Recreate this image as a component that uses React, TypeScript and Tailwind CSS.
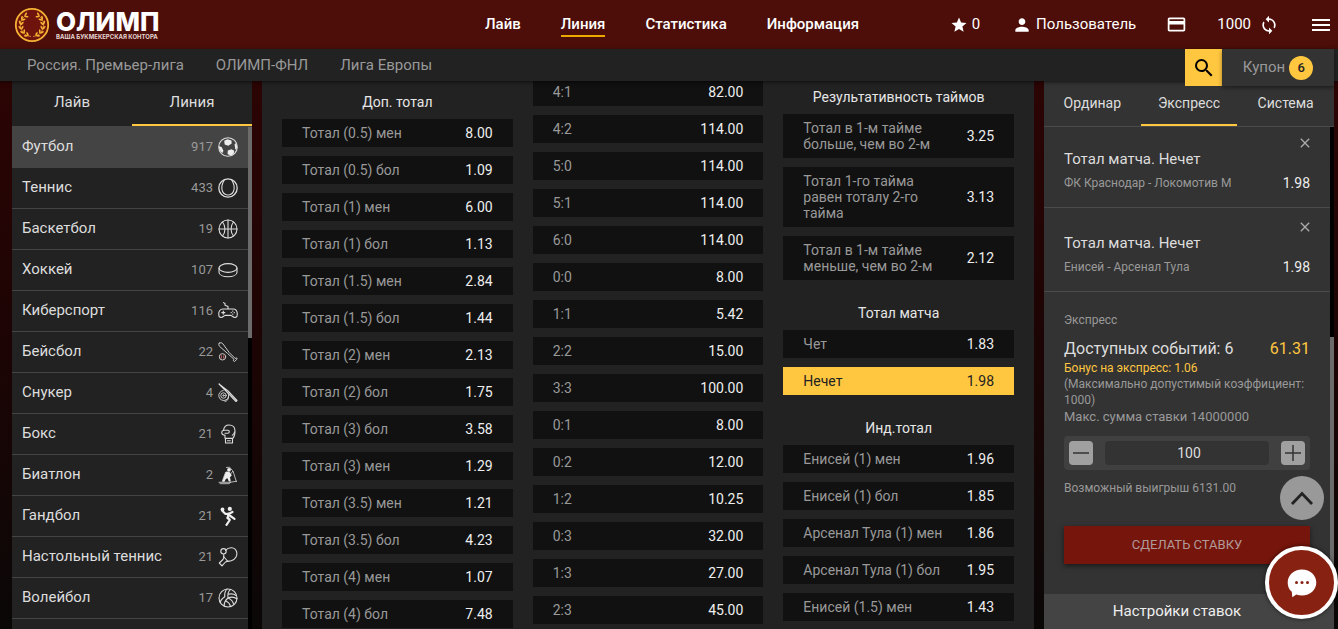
import { useState, type ReactNode } from "react";
import {
  MdClose,
  MdCreditCard,
  MdMenu,
  MdPerson,
  MdSearch,
  MdStar,
  MdSync,
} from "react-icons/md";

type Outcome = { name: string; odds: string };
type Market = { title?: string; outcomes: Outcome[] };
type Bet = { id: number; title: string; match: string; odds: string };
type Sport = { name: string; count: number; icon: ReactNode };

const toOutcomes = (rows: [string, string][]): Outcome[] =>
  rows.map(([name, odds]) => ({ name, odds }));

const extraTotal: Market = {
  title: "Доп. тотал",
  outcomes: toOutcomes([
    ["Тотал (0.5) мен", "8.00"],
    ["Тотал (0.5) бол", "1.09"],
    ["Тотал (1) мен", "6.00"],
    ["Тотал (1) бол", "1.13"],
    ["Тотал (1.5) мен", "2.84"],
    ["Тотал (1.5) бол", "1.44"],
    ["Тотал (2) мен", "2.13"],
    ["Тотал (2) бол", "1.75"],
    ["Тотал (3) бол", "3.58"],
    ["Тотал (3) мен", "1.29"],
    ["Тотал (3.5) мен", "1.21"],
    ["Тотал (3.5) бол", "4.23"],
    ["Тотал (4) мен", "1.07"],
    ["Тотал (4) бол", "7.48"],
  ]),
};

const scores: Market = {
  outcomes: toOutcomes([
    ["4:1", "82.00"],
    ["4:2", "114.00"],
    ["5:0", "114.00"],
    ["5:1", "114.00"],
    ["6:0", "114.00"],
    ["0:0", "8.00"],
    ["1:1", "5.42"],
    ["2:2", "15.00"],
    ["3:3", "100.00"],
    ["0:1", "8.00"],
    ["0:2", "12.00"],
    ["1:2", "10.25"],
    ["0:3", "32.00"],
    ["1:3", "27.00"],
    ["2:3", "45.00"],
  ]),
};

const halves: Market = {
  title: "Результативность таймов",
  outcomes: toOutcomes([
    ["Тотал в 1-м тайме больше, чем во 2-м", "3.25"],
    ["Тотал 1-го тайма равен тоталу 2-го тайма", "3.13"],
    ["Тотал в 1-м тайме меньше, чем во 2-м", "2.12"],
  ]),
};

const parity: Market = {
  title: "Тотал матча",
  outcomes: toOutcomes([
    ["Чет", "1.83"],
    ["Нечет", "1.98"],
  ]),
};

const teamTotal: Market = {
  title: "Инд.тотал",
  outcomes: toOutcomes([
    ["Енисей (1) мен", "1.96"],
    ["Енисей (1) бол", "1.85"],
    ["Арсенал Тула (1) мен", "1.86"],
    ["Арсенал Тула (1) бол", "1.95"],
    ["Енисей (1.5) мен", "1.43"],
  ]),
};

const initialBets: Bet[] = [
  { id: 1, title: "Тотал матча. Нечет", match: "ФК Краснодар - Локомотив М", odds: "1.98" },
  { id: 2, title: "Тотал матча. Нечет", match: "Енисей - Арсенал Тула", odds: "1.98" },
];

function Icon({ children }: { children: ReactNode }) {
  return (
    <svg
      viewBox="0 0 20 20"
      className="size-5 shrink-0"
      fill="none"
      stroke="#ddd"
      strokeWidth="1.1"
      strokeLinecap="round"
      strokeLinejoin="round"
      aria-hidden="true"
    >
      {children}
    </svg>
  );
}

const sports: Sport[] = [
  {
    name: "Футбол",
    count: 917,
    icon: (
      <Icon>
        <circle cx="10" cy="10" r="9.3" />
        <g fill="#eee" stroke="none">
          <path d="M6.2 3.8 9.5 2.2l4 1.2.2 3-3.4 2.3-3.6-1.2z" />
          <path d="M1 9.2 3.6 10l1.8 3.7-.9 2.4C2.3 14.3.8 12 1 9.2z" />
          <path d="M9.8 13.4l3.7-1.2 2.8 1.6-.7 3.2-3 1.8-3-1.8z" />
          <path d="M16.6 7.2l1.5-1.2c1 2 1.200 4.4.4 6.3l-1.2.1z" />
        </g>
      </Icon>
    ),
  },
  {
    name: "Теннис",
    count: 433,
    icon: (
      <Icon>
        <circle cx="10" cy="10" r="9.2" strokeWidth="1.3" />
        <path d="M6.3 2C3.800 6 3.300 10.500 4.600 13.600c2.100 4.600 8.700 4.600 10.800 0 1.300-3.100.8-7.600-1.700-11.600" />
      </Icon>
    ),
  },
  {
    name: "Баскетбол",
    count: 19,
    icon: (
      <Icon>
        <circle cx="10" cy="10" r="9" />
        <path d="M10 1v18M1 10h18M4.5 3c3.3 4 3.3 10 0 14M15.5 3c-3.3 4-3.3 10 0 14" />
      </Icon>
    ),
  },
  {
    name: "Хоккей",
    count: 107,
    icon: (
      <Icon>
        <ellipse cx="10" cy="8" rx="9" ry="4.4" />
        <path d="M1 8v4.200c0 6 18 6 18 0V8" />
      </Icon>
    ),
  },
  {
    name: "Киберспорт",
    count: 116,
    icon: (
      <Icon>
        <path d="M5 8h10c3 0 4.3 2.3 4.3 5.2 0 3.3-2.5 4.1-4.6 2.3L13 14.4H7l-1.7 1.1C3.2 17.3.7 16.5.7 13.2.7 10.3 2 8 5 8zM10 7.8V5.5L7 4.2V2.5l-1.5-.9" />
        <path d="M3.8 11.6h3M5.3 10.1v3" />
        <path
          d="M13.2 11.6h.1M16.2 11.6h.1M14.7 10.1h.1M14.7 13.1h.1"
          strokeWidth="1.3"
        />
      </Icon>
    ),
  },
  {
    name: "Бейсбол",
    count: 22,
    icon: (
      <Icon>
        <path
          d="M1.2 1.2C2.500.2 4 .8 5 2l6.2 8.5 6 6 1.3-.7.7 1.2-2.7 2.5-1.2-.8.7-1.4-6.4-5.8L1.5 4.3C.8 3.2.5 2 1.2 1.2z"
          strokeWidth=".9"
        />
        <circle cx="4.5" cy="14.8" r="3.2" strokeWidth=".9" />
        <path
          d="M2.7 12.7c1.2 1.2 1.2 3 0 4.2M6.3 12.7c-1.2 1.2-1.2 3 0 4.2"
          stroke="#c66"
          strokeWidth=".9"
        />
      </Icon>
    ),
  },
  {
    name: "Снукер",
    count: 4,
    icon: (
      <Icon>
        <path d="M1 1l9 7 9 9.5-1 1L9.5 9.7z" />
        <g strokeWidth=".9">
          <path d="M9.8 9.500a5 5 0 1 1-4.600-2" />
          <circle cx="5.5" cy="12.5" r="2.7" />
          <circle cx="5.5" cy="12.5" r=".7" />
          <path d="M10.5 13.500a4.600 4.600 0 0 1-3.500 5" />
        </g>
      </Icon>
    ),
  },
  {
    name: "Бокс",
    count: 21,
    icon: (
      <Icon>
        <path d="M7 14.2v-3c-2-.3-3.3-1.2-3.3-2.5S4.8 6.500 5.5 6.3C6 2.5 8 1 11 1c4 0 6 2.5 6 6 0 3-.5 5.5-2 7.2z" />
        <path d="M5.5 6.3h4.3c2 0 2 3 0 3H7M14.3 11.3c1.400-.7 2-2 2.200-3.300" />
        <path d="M7.5 14.5h7V19h-7zM9.5 16.7h2.8" />
      </Icon>
    ),
  },
  {
    name: "Биатлон",
    count: 2,
    icon: (
      <Icon>
        <g fill="#eee" stroke="none">
          <circle cx="11" cy="4.8" r="1.9" />
          <path d="M8 6.500l3.5.5 2.3 3.2-1.8 2 .8 4.3h-2l-1.3-3.3-1.7.8-1.3 2.8H4.3l1.5-4.500L7 9z" />
        </g>
        <g strokeWidth=".8">
          <path d="M7.5 7.500l-3.200 8.700M8.500 2.500l3-.3 3 3.300M13 8.500l2-2.500 3.300 10.500" />
          <path d="M1 17.300h11l6.500-1M2 18.700h9l1.500-1.200" />
        </g>
      </Icon>
    ),
  },
  {
    name: "Гандбол",
    count: 21,
    icon: (
      <Icon>
        <circle cx="11.8" cy="2.9" r="2.1" fill="#eee" stroke="none" />
        <circle cx="4.5" cy="3.5" r="1.9" fill="#eee" stroke="none" />
        <g stroke="#eee" strokeWidth="2.2">
          <path d="M4.500 5l3 3 3.500-.3 3.500-1.800M10.500 8l-1 4.300" />
          <path d="M9.800 11.500l2 2.500-3.300 4.800M11 9l5.500 3.800" />
        </g>
      </Icon>
    ),
  },
  {
    name: "Настольный теннис",
    count: 21,
    icon: (
      <Icon>
        <path d="M7.5 3.3C11-.4 17-.1 18.5 4.5c1.3 4-1.3 8.5-5.2 9.3-2.500.5-4 .2-5.800 1.200L4 18.800 1.300 16 5 12.500c1.300-2 .7-3.700.7-5" />
        <path d="M5.5 9.5l4.500 5" />
        <circle cx="5.5" cy="4.3" r="2.7" />
      </Icon>
    ),
  },
  {
    name: "Волейбол",
    count: 17,
    icon: (
      <Icon>
        <circle cx="10" cy="10" r="9" />
        <path d="M10 10C9.500 6.500 10.500 3 12.500 1.300M6.800 8.800C6.300 5.500 7.500 2.700 9 1M10 10c3.300-1.300 6.500-1 8.900.8M10.300 6.300c3-.8 5.800-.2 7.800 1.200M10 10c-2.500 2-4 5-3.800 8M6.800 8.800C4.300 10.500 2.500 12.500 2.300 14.500M10 10c3 1.300 5 3.500 5.600 6M7.800 13c2.200.8 4 2.700 4.700 5.300" />
      </Icon>
    ),
  },
];

function LaurelLogo() {
  const leaves = [-62, -38, -14, 10, 34, 58];
  return (
    <svg viewBox="0 0 36 36" className="size-9 shrink-0" fill="none" aria-hidden="true">
      <circle cx="18" cy="18" r="16.2" fill="#6f140c" stroke="#f5b335" strokeWidth="1.8" />
      {[1, -1].map((side) => (
        <g key={side} transform={`translate(18 18) scale(${side} 1)`}>
          <path d="M1 11.5A11.5 11.5 0 0 0 7.5-8.7" stroke="#f5b335" strokeWidth=".7" />
          {leaves.map((angle) => (
            <g key={angle} transform={`rotate(${angle}) translate(11.3 0)`} fill="#f5b335">
              <ellipse cx="-1.6" cy="0" rx=".9" ry="2.1" transform="rotate(-35)" />
              <ellipse cx="1.2" cy="0" rx=".9" ry="2.1" transform="rotate(30)" />
            </g>
          ))}
        </g>
      ))}
    </svg>
  );
}

function Header() {
  const links = ["Лайв", "Линия", "Статистика", "Информация"];
  return (
    <header className="grid h-[49px] shrink-0 grid-cols-[1fr_auto_1fr] items-center bg-[#4d0e09] pr-2 pl-[14px] text-[15px] text-white">
      <a href="#" className="flex items-center gap-[6px]">
        <LaurelLogo />
        <span className="flex flex-col font-[Inter,sans-serif]">
          <span className="text-[26px] leading-6 font-extrabold">ОЛИМП</span>
          <span className="text-[6px] leading-[6px] font-bold whitespace-nowrap text-[#e6d5d3]">
            ВАША БУКМЕКЕРСКАЯ КОНТОРА
          </span>
        </span>
      </a>
      <nav className="flex gap-10 font-medium">
        {links.map((link) => (
          <a
            key={link}
            href="#"
            className={`border-b-2 leading-[22px] ${link === "Линия" ? "border-[#eba900]" : "border-transparent"}`}
          >
            {link}
          </a>
        ))}
      </nav>
      <div className="flex items-center justify-end">
        <button type="button" className="mr-8 flex items-center gap-1">
          <MdStar className="size-[18px]" />0
        </button>
        <button type="button" className="mr-[30px] flex items-center gap-1">
          <MdPerson className="size-5" />
          Пользователь
        </button>
        <button type="button" aria-label="Пополнить" className="mr-[30px]">
          <MdCreditCard className="size-[21px]" />
        </button>
        <button type="button" className="mr-[30px] flex items-center gap-2">
          1000
          <MdSync className="size-5" />
        </button>
        <button type="button" aria-label="Меню" className="-mr-[3px]">
          <MdMenu className="size-6" />
        </button>
      </div>
    </header>
  );
}

function LeagueBar({ count }: { count: number }) {
  return (
    <div className="relative z-10 flex h-8 shrink-0 items-start bg-[#222] pr-1 pl-[27px] text-[15px] text-[#999] shadow-[0_1px_4px_rgba(0,0,0,0.6)]">
      <nav className="flex flex-1 gap-8 leading-8">
        <a href="#">Россия. Премьер-лига</a>
        <a href="#">ОЛИМП-ФНЛ</a>
        <a href="#">Лига Европы</a>
      </nav>
      <button
        type="button"
        aria-label="Поиск"
        className="flex size-[37px] items-center justify-center bg-[#ffc640] text-black"
      >
        <MdSearch className="size-6" />
      </button>
      <button
        type="button"
        className="flex h-[37px] w-28 items-center justify-center gap-1 bg-[#333] shadow-[0_2px_4px_rgba(0,0,0,0.4)]"
      >
        Купон
        <span className="flex size-6 items-center justify-center rounded-full bg-[#ffc640] text-[13px] font-medium text-[#222]">
          {count}
        </span>
      </button>
    </div>
  );
}

function Sidebar() {
  const [active, setActive] = useState("Футбол");
  return (
    <aside className="flex w-60 shrink-0 flex-col bg-[#222]">
      <div className="flex h-[45px] shrink-0 text-[15px] text-[#ddd]">
        <button type="button" className="flex-1 border-b-2 border-transparent">
          Лайв
        </button>
        <button type="button" className="flex-1 border-b-2 border-[#ffc640]">
          Линия
        </button>
      </div>
      <div className="flex min-h-0 flex-1 border-t border-[#444]">
        <ul className="min-w-0 flex-1 overflow-hidden">
          {sports.map((sport) => (
            <li key={sport.name}>
              <button
                type="button"
                onClick={() => setActive(sport.name)}
                className={`flex h-[41px] w-full items-center border-b border-[#444] px-[10px] text-left ${active === sport.name ? "bg-[#444]" : ""}`}
              >
                <span className="flex-1 pb-[2px] text-[15px] text-[#ddd]">{sport.name}</span>
                <span className="mr-[5px] text-[13px] text-[#999]">{sport.count}</span>
                {sport.icon}
              </button>
            </li>
          ))}
        </ul>
        <div className="w-1 bg-black">
          <div className="h-[42%] bg-[#6b6b6b]" />
        </div>
      </div>
    </aside>
  );
}

type MarketProps = {
  market: Market;
  selected: string;
  onSelect: (name: string) => void;
};

function MarketBlock({ market, selected, onSelect }: MarketProps) {
  return (
    <section className="flex flex-col gap-[9px] text-sm leading-4">
      {market.title && <h2 className="text-center text-[#e6e6e6]">{market.title}</h2>}
      {market.outcomes.map(({ name, odds }) => {
        const on = name === selected;
        return (
          <button
            key={name}
            type="button"
            onClick={() => onSelect(name)}
            className={`flex items-center px-5 py-[6px] text-left ${on ? "bg-[#ffc640] text-[#222]" : "bg-[#111] text-[#999]"}`}
          >
            <span className="flex-1 pr-4">{name}</span>
            <span className={on ? "" : "text-[#eee]"}>{odds}</span>
          </button>
        );
      })}
    </section>
  );
}

function Markets() {
  const [selected, setSelected] = useState("Нечет");
  const shared = { selected, onSelect: setSelected };
  return (
    <main className="grid min-w-0 flex-1 grid-cols-3 items-start gap-5 overflow-hidden bg-[#222] px-5">
      <div className="pt-[13px]">
        <MarketBlock market={extraTotal} {...shared} />
      </div>
      <div className="-mt-[3px]">
        <MarketBlock market={scores} {...shared} />
      </div>
      <div className="flex flex-col gap-[25px] pt-2">
        <MarketBlock market={halves} {...shared} />
        <MarketBlock market={parity} {...shared} />
        <MarketBlock market={teamTotal} {...shared} />
      </div>
    </main>
  );
}

function Coupon() {
  const [bets, setBets] = useState(initialBets);
  const [stake, setStake] = useState("100");
  const step = (delta: number) => setStake(String(Math.max(0, Number(stake) + delta)));

  return (
    <aside className="flex w-[290px] shrink-0 flex-col bg-[#333]">
      <div className="flex h-[46px] shrink-0 border-b border-[#4a4a4a] text-sm text-[#ddd]">
        {["Ординар", "Экспресс", "Система"].map((tab) => (
          <button
            key={tab}
            type="button"
            className={`flex-1 border-b-2 ${tab === "Экспресс" ? "border-[#ffc640]" : "border-transparent"}`}
          >
            {tab}
          </button>
        ))}
      </div>
      <div className="flex min-h-0 flex-1">
        <div className="min-w-0 flex-1 overflow-hidden">
          <ul className="-mt-[3px]">
            {bets.map((bet) => (
              <li
                key={bet.id}
                className="h-[84px] border-b border-[#4a4a4a] px-5 pt-[11px] text-[#ddd]"
              >
                <div className="flex justify-end">
                  <button
                    type="button"
                    aria-label="Удалить"
                    onClick={() => setBets(bets.filter((b) => b.id !== bet.id))}
                    className="-mr-[3px] text-[#aaa]"
                  >
                    <MdClose className="size-4" />
                  </button>
                </div>
                <h3 className="text-[15px] leading-4">{bet.title}</h3>
                <div className="mt-2 flex items-center justify-between leading-4">
                  <span className="text-xs text-[#999]">{bet.match}</span>
                  <span className="text-sm leading-4 text-[#eee]">{bet.odds}</span>
                </div>
              </li>
            ))}
          </ul>
          <div className="px-5 pt-5 text-xs leading-4 text-[#999]">
            <p>Экспресс</p>
            <div className="mt-[11px] mb-px flex justify-between text-base leading-5 text-[#ddd]">
              <span>Доступных событий: 6</span>
              <span className="text-[#ffc640]">61.31</span>
            </div>
            <p className="text-[#ffc640]">Бонус на экспресс: 1.06</p>
            <p>(Максимально допустимый коэффициент: 1000)</p>
            <p className="text-[13px] leading-[18px]">Макс. сумма ставки 14000000</p>
            <div className="mt-[10px] flex h-[34px] items-center gap-3 rounded-sm bg-[#404040] px-[5px]">
              <button
                type="button"
                aria-label="Уменьшить"
                onClick={() => step(-10)}
                className="flex size-6 items-center justify-center rounded-sm bg-[#a0a0a0]"
              >
                <svg viewBox="0 0 16 16" className="size-4" stroke="#333" strokeWidth="1.5" aria-hidden="true">
                  <path d="M0 8h16" />
                </svg>
              </button>
              <input
                type="text"
                aria-label="Сумма ставки"
                value={stake}
                onChange={(e) => setStake(e.target.value)}
                className="h-6 min-w-0 flex-1 rounded-sm bg-[#333] pl-1 text-center text-sm text-[#ddd]"
              />
              <button
                type="button"
                aria-label="Увеличить"
                onClick={() => step(10)}
                className="flex size-6 items-center justify-center rounded-sm bg-[#a0a0a0]"
              >
                <svg viewBox="0 0 16 16" className="size-4" stroke="#333" strokeWidth="1.5" aria-hidden="true">
                  <path d="M0 8h16M8 0v16" />
                </svg>
              </button>
            </div>
            <p className="mt-[10px]">Возможный выигрыш 6131.00</p>
            <button
              type="button"
              className="mt-[30px] h-[38px] w-full bg-[#76150c] text-[13px] text-[#b09a98] shadow-[0_2px_5px_rgba(0,0,0,0.5)]"
            >
              СДЕЛАТЬ СТАВКУ
            </button>
          </div>
        </div>
        <div className="flex w-1 flex-col justify-end bg-black">
          <div className="h-[55%] bg-[#6b6b6b]" />
        </div>
      </div>
      <button type="button" className="h-[35px] shrink-0 bg-[#444] pr-6 text-[15px] text-[#eee]">
        Настройки ставок
      </button>
    </aside>
  );
}

function FloatingButtons() {
  return (
    <div className="fixed right-0 bottom-[10px] z-20 flex flex-col items-center gap-[26px]">
      <button
        type="button"
        aria-label="Наверх"
        className="flex size-11 items-center justify-center rounded-full bg-[#999]"
      >
        <svg viewBox="0 0 24 24" className="size-6" fill="none" stroke="#222" strokeWidth="2.8" aria-hidden="true">
          <path d="M2 18 12 7.5 22 18" />
        </svg>
      </button>
      <button
        type="button"
        aria-label="Чат"
        className="flex size-[73px] items-center justify-center rounded-full border-4 border-white bg-[#872111] shadow-[0_0_4px_rgba(0,0,0,0.6)]"
      >
        <svg viewBox="0 0 30 30" className="size-[30px]" aria-hidden="true">
          <path
            d="M15 1.500c8.300 0 14.300 5.700 14.300 13S23.300 27.500 15 27.500c-2 0-4-.3-5.700-1L5.300 29.300l-.5-5.500C2 21.500.7 18.300.7 14.500c0-7.300 6-13 14.300-13z"
            fill="#fff"
          />
          <g fill="#872111">
            <circle cx="9.5" cy="14.5" r="1.5" />
            <circle cx="15" cy="14.5" r="1.5" />
            <circle cx="20.5" cy="14.5" r="1.5" />
          </g>
        </svg>
      </button>
    </div>
  );
}

export default function App() {
  return (
    <div className="flex h-screen flex-col overflow-hidden bg-[#0c0606] font-[Roboto,'Liberation_Sans',sans-serif]">
      <Header />
      <LeagueBar count={6} />
      <div className="flex min-h-0 flex-1 gap-[10px] bg-linear-to-b from-[#2c0404] via-[#1c0404] to-[#0a0707] pr-1 pl-3">
        <Sidebar />
        <Markets />
        <Coupon />
      </div>
      <FloatingButtons />
    </div>
  );
}
